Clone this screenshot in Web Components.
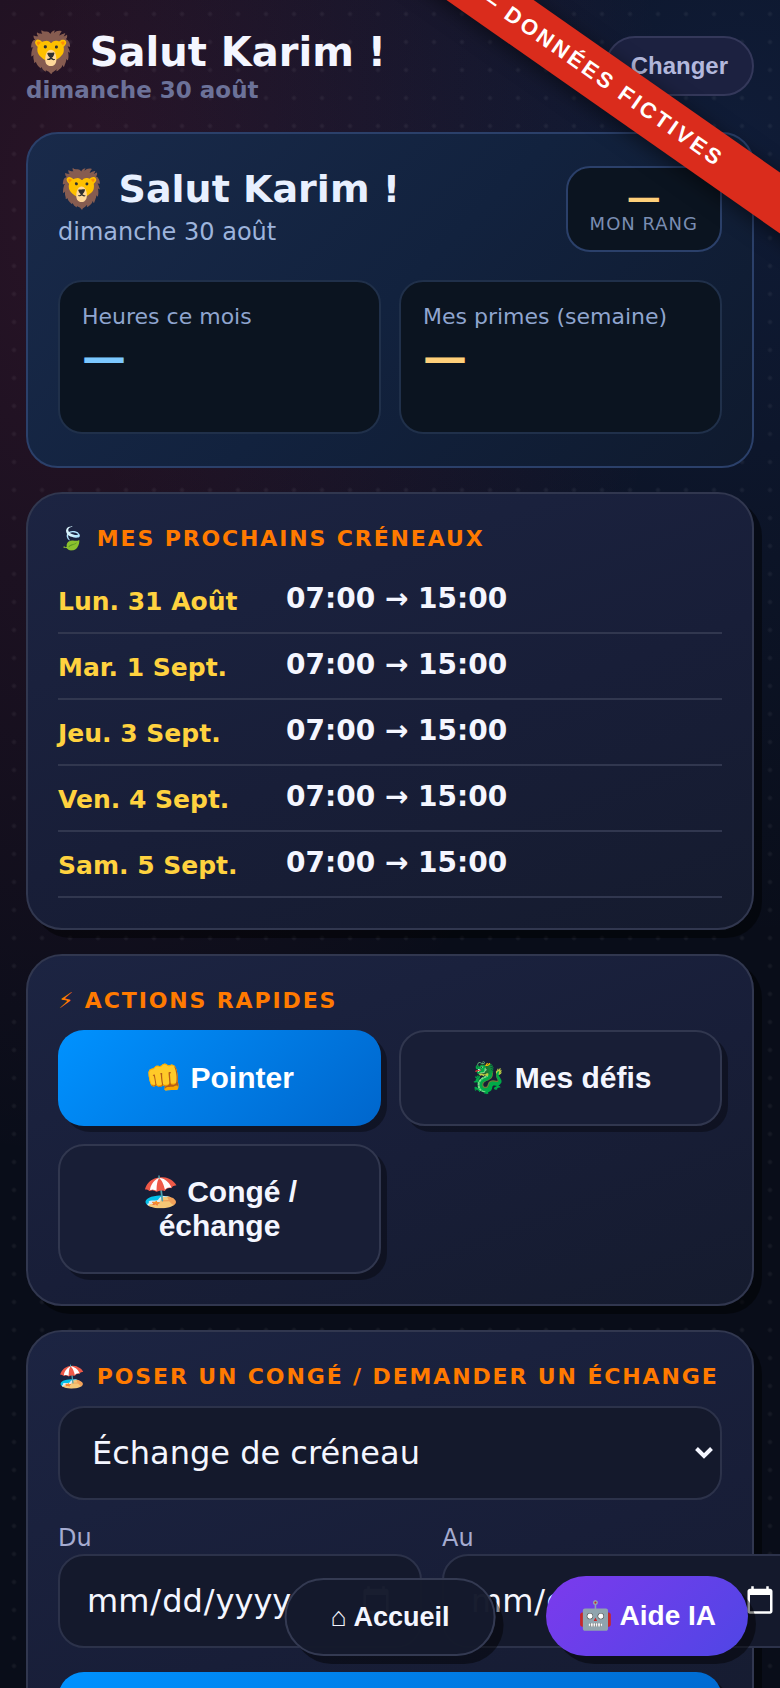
<!DOCTYPE html>
<html lang="fr">
<head>
<meta charset="utf-8">
<meta name="viewport" content="width=device-width, initial-scale=1">
<title>Mon espace</title>
<style>
	body {
		margin: 0;
		background: #090d19;
		color: #f4f6ff;
		font-family: "DejaVu Sans", "Noto Color Emoji", sans-serif;
		--line: #31374f;
		--blue: linear-gradient(135deg, #0092ff, #0066cc);
		--button-font: "Liberation Sans", Arial, "DejaVu Sans", sans-serif;
	}
</style>
</head>
<body>

<fos-app>
	<fos-header slot="header" date="dimanche 30 août">🦁 Salut Karim !</fos-header>

	<fos-hero date="dimanche 30 août" rank="—">
		🦁 Salut Karim !
		<fos-stat slot="stats" label="Heures ce mois" value="—"></fos-stat>
		<fos-stat slot="stats" label="Mes primes (semaine)" value="—" tone="gold"></fos-stat>
	</fos-hero>

	<fos-card heading="🍃 Mes prochains créneaux">
		<fos-shift day="Lun. 31 Août">07:00 → 15:00</fos-shift>
		<fos-shift day="Mar. 1 Sept.">07:00 → 15:00</fos-shift>
		<fos-shift day="Jeu. 3 Sept.">07:00 → 15:00</fos-shift>
		<fos-shift day="Ven. 4 Sept.">07:00 → 15:00</fos-shift>
		<fos-shift day="Sam. 5 Sept.">07:00 → 15:00</fos-shift>
	</fos-card>

	<fos-card heading="⚡︎ Actions rapides">
		<fos-actions>
			<fos-action primary>👊 Pointer</fos-action>
			<fos-action>🐉 Mes défis</fos-action>
			<fos-action>🏖️ Congé / échange</fos-action>
		</fos-actions>
	</fos-card>

	<fos-card heading="🏖️ Poser un congé / demander un échange">
		<fos-leave-form></fos-leave-form>
	</fos-card>

	<fos-float slot="overlay" place="center" href="#accueil">⌂ Accueil</fos-float>
	<fos-float slot="overlay" place="right">🤖 Aide IA</fos-float>
	<fos-ribbon slot="overlay">— DONNÉES FICTIVES</fos-ribbon>
</fos-app>

<script>
class Base extends HTMLElement {

	constructor(){

		super()

		this.shadow = this.attachShadow({mode: 'open'})

	}

	connectedCallback() {

		this.render()

	}

	attr(name) {

		return this.getAttribute(name) || ''

	}

}

// page shell: dotted background, scrolling column, floating layer
class App extends Base {

	render(){

		this.shadow.innerHTML = `
			<style>
				:host{
					display: block;
					position: relative;
					height: 100vh;
					overflow: hidden;
					background:
						radial-gradient(circle at 14px 14px, rgba(255,255,255,.05) 1px, transparent 3px) 0 0 / 28px 28px,
						radial-gradient(ellipse 80% 60% at 10% 12%, rgba(235,60,120,.14), transparent 95%),
						radial-gradient(ellipse 95% 50% at 95% 8%, rgba(45,95,190,.18), transparent 95%),
						#090d19;
				}
				.scroll{
					height: 100%;
					box-sizing: border-box;
					overflow: hidden auto;
					scrollbar-width: none;
					padding: 28px 26px 0;
				}
				main{
					display: flex;
					flex-direction: column;
					gap: 24px;
					margin-top: 28px;
				}
			</style>
			<div class="scroll">
				<slot name="header"></slot>
				<main><slot></slot></main>
			</div>
			<slot name="overlay"></slot>
		`

	}

}

class Header extends Base {

	render(){

		this.shadow.innerHTML = `
			<style>
				:host{
					display: flex;
					align-items: center;
					justify-content: space-between;
				}
				h1{
					margin: 0;
					font-size: 40px;
					line-height: 48px;
				}
				p{
					margin: 0;
					color: #6c7299;
					font-size: 23px;
					font-weight: bold;
					line-height: 28px;
				}
				button{
					padding: 14px 24px;
					border: 2px solid #34385a;
					border-radius: 30px;
					background: #1c2140;
					color: #b3b8dc;
					font: bold 24px/28px var(--button-font);
				}
			</style>
			<div>
				<h1><slot></slot></h1>
				<p>${this.attr('date')}</p>
			</div>
			<button type="button">Changer</button>
		`

	}

}

class Hero extends Base {

	render(){

		this.shadow.innerHTML = `
			<style>
				:host{
					display: block;
					padding: 32px 30px;
					border: 2px solid #2b406a;
					border-radius: 32px;
					background: linear-gradient(135deg, #192a4a, #12223e 50%, #0f1a2e);
				}
				.head{
					display: flex;
					align-items: flex-start;
					justify-content: space-between;
					margin-bottom: 28px;
				}
				h2{
					margin: 0 0 6px;
					color: #e8f0ff;
					font-size: 38px;
					line-height: 46px;
				}
				p{
					margin: 0;
					color: #9db4dc;
					font-size: 24px;
					line-height: 28px;
				}
				.rank{
					padding: 14px 22px;
					border: 2px solid #2b406a;
					border-radius: 24px;
					background: #0b1420;
					text-align: center;
				}
				.rank b{
					display: block;
					color: #ffd07a;
					font-size: 34px;
					line-height: 30px;
				}
				.rank span{
					display: block;
					color: #7a8db2;
					font-size: 18px;
					letter-spacing: 1px;
					line-height: 24px;
				}
				.stats{
					display: grid;
					grid-template-columns: 1fr 1fr;
					gap: 18px;
				}
			</style>
			<div class="head">
				<div>
					<h2><slot></slot></h2>
					<p>${this.attr('date')}</p>
				</div>
				<div class="rank"><b>${this.attr('rank')}</b><span>MON RANG</span></div>
			</div>
			<div class="stats"><slot name="stats"></slot></div>
		`

	}

}

class Stat extends Base {

	render(){

		this.shadow.innerHTML = `
			<style>
				:host{
					display: block;
					box-sizing: border-box;
					min-height: 154px;
					padding: 20px 22px;
					border: 2px solid #20304a;
					border-radius: 24px;
					background: #0b1420;
					color: #8fa5cf;
					font-size: 22px;
					line-height: 30px;
				}
				b{
					display: block;
					color: #7cc8ff;
					font-size: 44px;
					line-height: 50px;
				}
				:host([tone=gold]) b{ color: #ffd07a; }
			</style>
			${this.attr('label')}
			<b>${this.attr('value')}</b>
		`

	}

}

class Card extends Base {

	render(){

		this.shadow.innerHTML = `
			<style>
				:host{
					display: block;
					padding: 30px;
					border: 2px solid var(--line);
					border-radius: 36px;
					background: linear-gradient(160deg, #1c2442, #181e38 55%, #151b2e);
					box-shadow: 8px 8px 0 rgba(0,0,0,.45);
				}
				h3{
					margin: 0 0 14px;
					color: #ff7a00;
					font-size: 22px;
					letter-spacing: .085em;
					line-height: 30px;
					text-transform: uppercase;
					white-space: nowrap;
				}
			</style>
			<h3>${this.attr('heading')}</h3>
			<slot></slot>
		`

	}

}

class Shift extends Base {

	render(){

		this.shadow.innerHTML = `
			<style>
				:host{
					display: grid;
					grid-template-columns: 228px 1fr;
					padding: 14px 0 10px;
					border-bottom: 2px solid var(--line);
					font-size: 28px;
					font-weight: bold;
					line-height: 34px;
				}
				span{
					color: #ffd23f;
					font-size: 25px;
					line-height: 40px;
				}
			</style>
			<span>${this.attr('day')}</span>
			<slot></slot>
		`

	}

}

class Actions extends Base {

	render(){

		this.shadow.innerHTML = `
			<style>
				:host{
					display: grid;
					grid-template-columns: 1fr 1fr;
					gap: 18px;
				}
			</style>
			<slot></slot>
		`

	}

}

class Action extends Base {

	render(){

		this.shadow.innerHTML = `
			<style>
				:host{ display: block; }
				button{
					width: 100%;
					padding: 29px 58px;
					border: 2px solid var(--line);
					border-radius: 26px;
					background: #181e36;
					box-shadow: 6px 6px 0 rgba(0,0,0,.35);
					color: #f4f6ff;
					font: bold 30px/34px var(--button-font);
				}
				:host([primary]) button{
					padding: 31px 60px;
					border: 0;
					background: var(--blue);
					color: #fff;
				}
			</style>
			<button type="button"><slot></slot></button>
		`

	}

}

class LeaveForm extends Base {

	render(){

		this.shadow.innerHTML = `
			<style>
				:host{ display: block; color-scheme: dark; }
				select, input{
					box-sizing: border-box;
					height: 94px;
					padding: 0 26px;
					border: 2px solid #2c324a;
					border-radius: 26px;
					background: #14192c;
					color: #f4f6ff;
					font: 32px "DejaVu Sans", sans-serif;
				}
				.select{
					display: grid;
					align-items: center;
					margin-bottom: 22px;
				}
				.select > *{ grid-area: 1 / 1; }
				select{
					width: 100%;
					padding: 0 32px;
					appearance: none;
				}
				svg{
					justify-self: end;
					width: 18px;
					height: 12px;
					margin-right: 9px;
					pointer-events: none;
				}
				.dates{
					display: flex;
					gap: 20px;
				}
				label{
					display: block;
					flex: none;
					color: #a5abd0;
					font-size: 24px;
					line-height: 32px;
				}
				input{
					display: block;
					width: 364px;
				}
				button{
					display: block;
					width: 100%;
					height: 96px;
					margin-top: 24px;
					border: 0;
					border-radius: 26px;
					background: var(--blue);
					box-shadow: 6px 6px 0 rgba(0,0,0,.35);
				}
			</style>
			<div class="select">
				<select aria-label="Type de demande">
					<option>Échange de créneau</option>
				</select>
				<svg viewBox="0 0 18 12" fill="none" stroke="#f4f6ff" stroke-width="4"><path d="M1.500 1.500 9 9l7.500-7.500"/></svg>
			</div>
			<div class="dates">
				<label>Du<input type="date"></label>
				<label>Au<input type="date"></label>
			</div>
			<button type="button" aria-label="Envoyer"></button>
		`

	}

}

// pill button that stays over the page
class Float extends Base {

	render(){

		const tag = this.hasAttribute('href') ? `a href="${this.attr('href')}"` : 'button type="button"'

		this.shadow.innerHTML = `
			<style>
				:host{
					position: absolute;
					bottom: 32px;
				}
				:host([place=center]){
					left: 50%;
					transform: translateX(-50%);
				}
				:host([place=right]){ right: 32px; }
				a, button{
					display: block;
					box-sizing: border-box;
					border-radius: 40px;
					box-shadow: 8px 8px 0 rgba(0,0,0,.45);
					white-space: nowrap;
				}
				a{
					padding: 22px 44px;
					border: 2px solid #343a52;
					background: rgba(20,25,44,.98);
					color: #f4f6ff;
					font: bold 27px/30px var(--button-font);
					text-decoration: none;
				}
				button{
					padding: 24px 32px;
					border: 0;
					background: linear-gradient(135deg, #7c3aed, #4f46e5);
					color: #fff;
					font: bold 28px/32px var(--button-font);
				}
			</style>
			<${tag}><slot></slot></${tag.split(' ')[0]}>
		`

	}

}

class Ribbon extends Base {

	render(){

		this.shadow.innerHTML = `
			<style>
				:host{
					position: absolute;
					top: 52px;
					right: -120px;
					box-sizing: border-box;
					width: 600px;
					padding: 12px 152px 12px 0;
					background: #da2c1c;
					box-shadow: 0 4px 20px rgba(0,0,0,.5);
					color: #fff;
					font: bold 22px/26px var(--button-font);
					letter-spacing: 3px;
					pointer-events: none;
					text-align: right;
					transform: rotate(35deg);
					white-space: nowrap;
				}
			</style>
			<slot></slot>
		`

	}

}

customElements.define('fos-app', App)
customElements.define('fos-header', Header)
customElements.define('fos-hero', Hero)
customElements.define('fos-stat', Stat)
customElements.define('fos-card', Card)
customElements.define('fos-shift', Shift)
customElements.define('fos-actions', Actions)
customElements.define('fos-action', Action)
customElements.define('fos-leave-form', LeaveForm)
customElements.define('fos-float', Float)
customElements.define('fos-ribbon', Ribbon)
</script>
</body>
</html>
